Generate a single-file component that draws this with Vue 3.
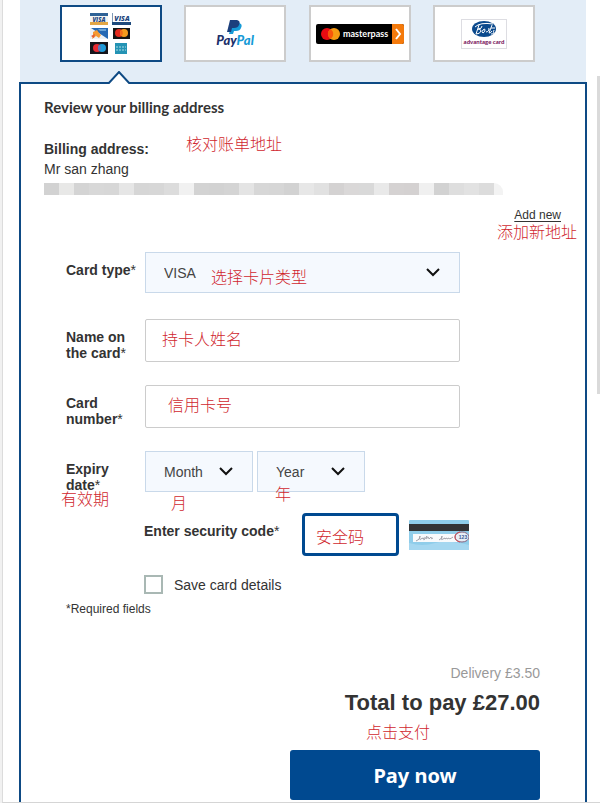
<script setup>
import { ref } from "vue";

const methods = [
    { id: "card", name: "Credit or debit card" },
    { id: "paypal", name: "PayPal" },
    { id: "masterpass", name: "masterpass" },
    { id: "advantage", name: "advantage card" },
];
const selected = ref("card");
const cardType = ref("VISA");
const cardName = ref("");
const cardNumber = ref("");
const month = ref("Month");
const year = ref("Year");
const code = ref("");
const save = ref(false);

const months = ["01", "02", "03", "04", "05", "06", "07", "08", "09", "10", "11", "12"];
const years = ["2018", "2019", "2020", "2021", "2022"];

// hidden address line, one shade per block
const blocks = [
    "#d2d2d2", "#e8e8e7", "#d4d4d4", "#d8d8d8", "#d7d7d7", "#e6e6e6", "#d6d6d6", "#d7d7d7",
    "#dcdcdc", "#f1f1f1", "#d3d3d3", "#d2d2d2", "#d4d4d4", "#e4e4e4", "#d7d7d7", "#d6d6d6",
    "#d2d2d2", "#e7e7e7", "#e1e1e1", "#d4d2d2", "#dad8d8", "#d9d9d9", "#e9e9e9", "#d5d2d2",
    "#d4d1d1", "#f0f0f0", "#d2d2d2", "#dedede", "#e2e2e2", "#dcdcdc",
];
</script>

<template>
    <div class="page">
        <div class="scrollbar"></div>
        <main class="checkout">
            <nav class="methods">
                <button
                    v-for="m in methods"
                    :key="m.id"
                    type="button"
                    class="method"
                    :class="{ active: selected === m.id }"
                    :aria-label="m.name"
                    @click="selected = m.id"
                >
                    <svg v-if="m.id === 'card'" width="42" height="42" viewBox="0 0 42 42">
                        <g>
                            <rect x="0" y="0" width="18" height="12" fill="#f4f4f2" />
                            <rect x="0" y="0" width="18" height="3" fill="#2f6296" />
                            <rect x="0" y="9" width="18" height="3" fill="#e2a646" />
                            <text x="9" y="9" class="visa" font-size="6" text-anchor="middle">VISA</text>
                        </g>
                        <g>
                            <rect x="22" y="0" width="1" height="11" fill="#7d97b5" />
                            <rect x="22" y="9" width="19" height="3" fill="#1e4a7c" />
                            <text x="32" y="8" class="visa" font-size="7" text-anchor="middle">VISA</text>
                        </g>
                        <g>
                            <rect x="0" y="15" width="18" height="11" fill="#eef2f6" />
                            <path d="M1 15H18V26Z" fill="#2468b4" />
                            <path d="M8 16h8v2h-6z" fill="#69a3d6" />
                            <path d="M3 19l4-2 2 3 2 2-2 3-3-2-4 3 1-4z" fill="#f49a32" />
                            <path d="M1 23l4-2-1 4z" fill="#e35b35" />
                        </g>
                        <g>
                            <rect x="23" y="15" width="17" height="11" fill="#151515" />
                            <circle cx="29" cy="20" r="4" fill="#e62b1e" />
                            <circle cx="34" cy="20" r="4" fill="#f69c1d" />
                            <path d="M31.500 17a4 4 0 0 1 0 6a4 4 0 0 1 0-6" fill="#f36a1c" />
                        </g>
                        <g>
                            <rect x="0" y="29" width="18" height="12" fill="#15151b" />
                            <circle cx="7" cy="35" r="4" fill="#e62a32" />
                            <circle cx="12" cy="35" r="4" fill="#1f9ad7" />
                            <path d="M9.500 32a4 4 0 0 1 0 6a4 4 0 0 1 0-6" fill="#6573bb" />
                        </g>
                        <g>
                            <rect x="25" y="30" width="12" height="11" fill="#2493b4" />
                            <path d="M26 34h10M26 37h10" stroke="#a8dbe5" stroke-dasharray="2 1" />
                        </g>
                    </svg>

                    <svg v-else-if="m.id === 'paypal'" width="42" height="30" viewBox="0 0 42 30">
                        <path d="M18 4h7q4 1 2 5q-1 3-5 3h-2l-1 3h-4z" fill="#169bd7" />
                        <path d="M16 1h7q4 1 2 5q-1 3-5 3h-2l-1 4h-4z" fill="#1c3f7c" />
                        <text x="21" y="26" class="paypal" text-anchor="middle">Pay<tspan fill="#169bd7">Pal</tspan></text>
                    </svg>

                    <svg v-else-if="m.id === 'masterpass'" width="88" height="20" viewBox="0 0 88 20">
                        <rect width="88" height="20" rx="2" fill="#000" />
                        <path d="M76 0h10a2 2 0 0 1 2 2v16a2 2 0 0 1-2 2H76z" fill="#f47a0c" />
                        <circle cx="11" cy="10" r="6" fill="#e90b12" />
                        <circle cx="18" cy="10" r="6" fill="#f79b13" />
                        <path d="M14.500 5a6 6 0 0 1 0 10a6 6 0 0 1 0-10" fill="#f9550b" />
                        <text x="27" y="13" class="masterpass">masterpass</text>
                        <path d="M80 5l4 5-4 5" fill="none" stroke="#fff" stroke-width="2" />
                    </svg>

                    <svg v-else width="46" height="30" viewBox="0 0 46 30">
                        <rect x="0.500" y="0.500" width="45" height="29" fill="#fff" stroke="#dddde2" />
                        <ellipse cx="23" cy="10" rx="12" ry="8" fill="#0b4a8d" />
                        <g fill="none" stroke="#fff">
                            <path d="M14 8q5-5 18-3M18 6l-3 9q4 0 5-3q0-2-3-2q4 0 4-3" />
                            <path d="M22 11q2-2 2 0t-2 3q-2-1 0-3M27 10q2-1 1 1t-3 2M31 6l-3 8q2 0 3-2M30 9h4M33 11q-1 2 0 3t-3 1" />
                        </g>
                        <text x="23" y="25" class="advantage" text-anchor="middle">advantage card</text>
                    </svg>
                </button>
            </nav>

            <section class="panel">
                <svg class="pointer" width="24" height="13" viewBox="0 0 24 13">
                    <path d="M1 13L12 1L23 13" fill="#fff" stroke="#0e4a84" stroke-width="2" />
                </svg>

                <h1>Review your billing address</h1>
                <div class="address">
                    <strong>Billing address:</strong>
                    <span>Mr san zhang</span>
                    <span class="note note-address">核对账单地址</span>
                    <div class="hidden-line">
                        <i v-for="(shade, i) in blocks" :key="i" :style="{ background: shade }"></i>
                        <i class="tail"></i>
                    </div>
                </div>
                <div class="add-new">
                    <a href="#">Add new</a>
                    <span class="note note-new">添加新地址</span>
                </div>

                <form @submit.prevent>
                    <div class="row">
                        <label for="type">Card type<span>*</span></label>
                        <div class="select">
                            <select id="type" v-model="cardType">
                                <option>VISA</option>
                                <option>Mastercard</option>
                            </select>
                            <svg class="chevron" width="16" height="10" viewBox="0 0 16 10">
                                <path d="M2 2l6 6 6-6" />
                            </svg>
                            <span class="note note-type">选择卡片类型</span>
                        </div>
                    </div>
                    <div class="row name">
                        <label for="name">Name on the card<span>*</span></label>
                        <div class="field">
                            <input id="name" v-model="cardName" type="text" />
                            <span class="note note-name">持卡人姓名</span>
                        </div>
                    </div>
                    <div class="row">
                        <label for="number">Card number<span>*</span></label>
                        <div class="field">
                            <input id="number" v-model="cardNumber" type="text" />
                            <span class="note note-number">信用卡号</span>
                        </div>
                    </div>
                    <div class="row expiry">
                        <label for="month">Expiry date<span>*</span></label>
                        <span class="note note-expiry">有效期</span>
                        <div class="dates">
                            <div class="select">
                                <select id="month" v-model="month">
                                    <option>Month</option>
                                    <option v-for="m in months" :key="m">{{ m }}</option>
                                </select>
                                <svg class="chevron" width="16" height="10" viewBox="0 0 16 10">
                                    <path d="M2 2l6 6 6-6" />
                                </svg>
                                <span class="note note-month">月</span>
                            </div>
                            <div class="select">
                                <select id="year" v-model="year" aria-label="Year">
                                    <option>Year</option>
                                    <option v-for="y in years" :key="y">{{ y }}</option>
                                </select>
                                <svg class="chevron" width="16" height="10" viewBox="0 0 16 10">
                                    <path d="M2 2l6 6 6-6" />
                                </svg>
                                <span class="note note-year">年</span>
                            </div>
                        </div>
                    </div>
                    <div class="security">
                        <label for="code">Enter security code<span>*</span></label>
                        <div class="field">
                            <input id="code" v-model="code" type="text" />
                            <span class="note note-code">安全码</span>
                        </div>
                        <svg width="60" height="30" viewBox="0 0 60 30">
                            <rect width="60" height="30" rx="1" fill="#8fcdea" />
                            <path d="M0 23q14 4 26 0t34 2v5H0z" fill="#a5d7f0" />
                            <rect y="4" width="60" height="7" fill="#333436" />
                            <rect x="4" y="14" width="49" height="8" fill="#f8fafc" />
                            <path
                                d="M7 21q4-1 4-5q-1 5 1 3t2 0q2-3 1 0t3-3q-2 4 0 2t2 1l2-2q0 3 2 1M30 20q4-2 3-4q-2 5 1 3t2 0q2-2 2 0l2-1q0 2 4-1"
                                fill="none"
                                stroke="#a3a3ab"
                            />
                            <ellipse cx="53" cy="17" rx="7" ry="5" fill="#e7eef6" stroke="#8a6580" />
                            <path d="M46 17q0-4 5-5M46 17q0 4 5 5" fill="none" stroke="#cc4c55" />
                            <text x="54" y="19" class="cvv" text-anchor="middle">123</text>
                        </svg>
                    </div>
                    <div class="save">
                        <input id="save" v-model="save" type="checkbox" />
                        <label for="save">Save card details</label>
                    </div>
                    <p class="required">*Required fields</p>
                </form>

                <div class="summary">
                    <p class="delivery">Delivery £3.50</p>
                    <p class="total">Total to pay £27.00</p>
                    <span class="note note-pay">点击支付</span>
                    <button type="button" class="pay">Pay now</button>
                </div>
            </section>
        </main>
    </div>
</template>

<style>
body {
    margin: 0;
    background: #f1f1f1;
}
</style>

<style scoped>
* {
    box-sizing: border-box;
}

.page {
    position: relative;
    display: flex;
    min-height: 100vh;
    margin-left: 2px;
    padding: 0 13px 0 16px;
    background: white;
    border-left: 1px solid #dcdcdc;
    border-bottom: 1px solid #d5d5d5;
    font-family: "Liberation Sans", "Noto Sans CJK SC", sans-serif;
    font-size: 14px;
    line-height: 20px;
    color: #333;
}

.scrollbar {
    position: absolute;
    top: 76px;
    right: 0;
    width: 3px;
    height: 318px;
    background: #dadada;
}

.checkout {
    flex: 1;
    display: flex;
    flex-direction: column;
}

.methods {
    display: flex;
    justify-content: space-between;
    margin: 0 1px;
    padding: 5px 51px 20px 40px;
    background: #e3edf7;
}

.method {
    display: flex;
    align-items: center;
    justify-content: center;
    width: 102px;
    height: 57px;
    padding: 0;
    background: white;
    border: 2px solid #ccc;
}

.method.active {
    border-color: #0e4a84;
}

.visa {
    font-family: "Open Sans", sans-serif;
    font-weight: 800;
    font-style: italic;
    fill: #1d4580;
}

.paypal {
    font-family: Lato, sans-serif;
    font-size: 13px;
    font-weight: 900;
    font-style: italic;
    fill: #1b2f6b;
}

.masterpass {
    font-family: Lato, sans-serif;
    font-size: 9px;
    font-weight: 700;
    fill: white;
}

.advantage {
    font-family: Lato, sans-serif;
    font-size: 6px;
    font-weight: 900;
    fill: #7d1c63;
}

.cvv {
    font-size: 5px;
    font-weight: 700;
    fill: #3b5a94;
}

.panel {
    position: relative;
    flex: 1;
    padding: 13px 24px 2px 23px;
    border: 2px solid #0e4a84;
    border-bottom: 0;
}

.pointer {
    position: absolute;
    top: -13px;
    left: 86px;
}

h1 {
    margin: 0 0 22px;
    font-family: Lato, sans-serif;
    font-size: 15px;
    line-height: 20px;
}

.address {
    position: relative;
    display: flex;
    flex-direction: column;
}

.hidden-line {
    display: flex;
    height: 12px;
    margin-top: 4px;
}

.hidden-line i {
    width: 15px;
}

.hidden-line .tail {
    width: 9px;
    background: #f3f3f3;
    border-top-right-radius: 9px;
}

.add-new {
    position: relative;
    margin-bottom: 27px;
    padding-top: 10px;
    text-align: right;
    font-size: 12px;
}

.add-new a {
    color: #333;
    text-underline-offset: 2px;
}

.note {
    position: absolute;
    font-family: "Noto Sans CJK SC", sans-serif;
    font-size: 16px;
    font-weight: 300;
    line-height: 20px;
    color: #d01f2e;
    white-space: nowrap;
    pointer-events: none;
}

.note-address {
    top: -6px;
    left: 142px;
}

.note-new {
    top: 26px;
    right: -16px;
}

.note-type {
    top: 14px;
    left: 66px;
}

.note-name {
    top: 9px;
    left: 17px;
}

.note-number {
    top: 9px;
    left: 23px;
}

.note-expiry {
    top: 37px;
    left: -5px;
}

.note-month {
    top: 41px;
    left: 26px;
}

.note-year {
    top: 32px;
    left: 18px;
}

.note-code {
    top: 13px;
    left: 14px;
}

.note-pay {
    top: 58px;
    right: 131px;
}

form {
    padding-left: 22px;
}

.row {
    position: relative;
    display: grid;
    grid-template-columns: 79px 1fr;
    align-items: start;
    margin-bottom: 23px;
    padding-right: 101px;
}

.row.name {
    margin-top: 26px;
}

label {
    font-weight: 700;
    line-height: 16px;
}

label span {
    font-weight: 400;
}

.row label {
    padding: 10px 8px 0 0;
}

.row:first-child label {
    padding-right: 0;
}

.select,
.field {
    position: relative;
}

select {
    display: block;
    width: 100%;
    height: 41px;
    padding: 0 18px;
    appearance: none;
    background: #f5f9fe;
    border: 1px solid #c9d9ea;
    border-radius: 0;
    font-family: inherit;
    font-size: 14px;
    color: #444;
}

.field input {
    display: block;
    width: 100%;
    height: 43px;
    padding: 0 16px;
    border: 1px solid #ccc;
    border-radius: 2px;
    font-family: inherit;
    font-size: 14px;
}

.chevron {
    position: absolute;
    top: 15px;
    right: 19px;
    fill: none;
    stroke: #111;
    stroke-width: 2px;
    pointer-events: none;
}

.dates {
    display: grid;
    grid-template-columns: 108px 108px;
    gap: 4px;
}

.row.expiry {
    margin-bottom: 20px;
}

.row.expiry label {
    padding-right: 24px;
}

.security {
    display: grid;
    grid-template-columns: 148px 97px 60px;
    gap: 10px;
    align-items: start;
    margin-left: 78px;
}

.security label {
    padding-top: 10px;
    white-space: nowrap;
}

.security svg {
    margin-top: 7px;
}

.security .field input {
    border: 3px solid #004990;
    border-radius: 4px;
}

.save {
    display: flex;
    align-items: center;
    gap: 11px;
    margin: 19px 0 0 78px;
}

.save input {
    width: 19px;
    height: 19px;
    margin: 0;
    appearance: none;
    background: white;
    border: 2px solid #a9b8b4;
}

.save input:checked {
    background: #004990;
}

.save label {
    font-weight: 400;
}

p {
    margin: 0;
}

.required {
    margin-top: 5px;
    font-size: 12px;
}

.summary {
    position: relative;
    display: flex;
    flex-direction: column;
    align-items: flex-end;
    margin-top: 44px;
    padding-right: 21px;
}

.delivery {
    color: #999;
}

.total {
    margin: 7px 0 34px;
    font-size: 22px;
    font-weight: 700;
    line-height: 26px;
}

.pay {
    width: 250px;
    height: 50px;
    background: #004990;
    border: 0;
    border-radius: 3px;
    font-family: "Noto Sans", sans-serif;
    font-size: 20px;
    font-weight: 700;
    color: white;
}
</style>
